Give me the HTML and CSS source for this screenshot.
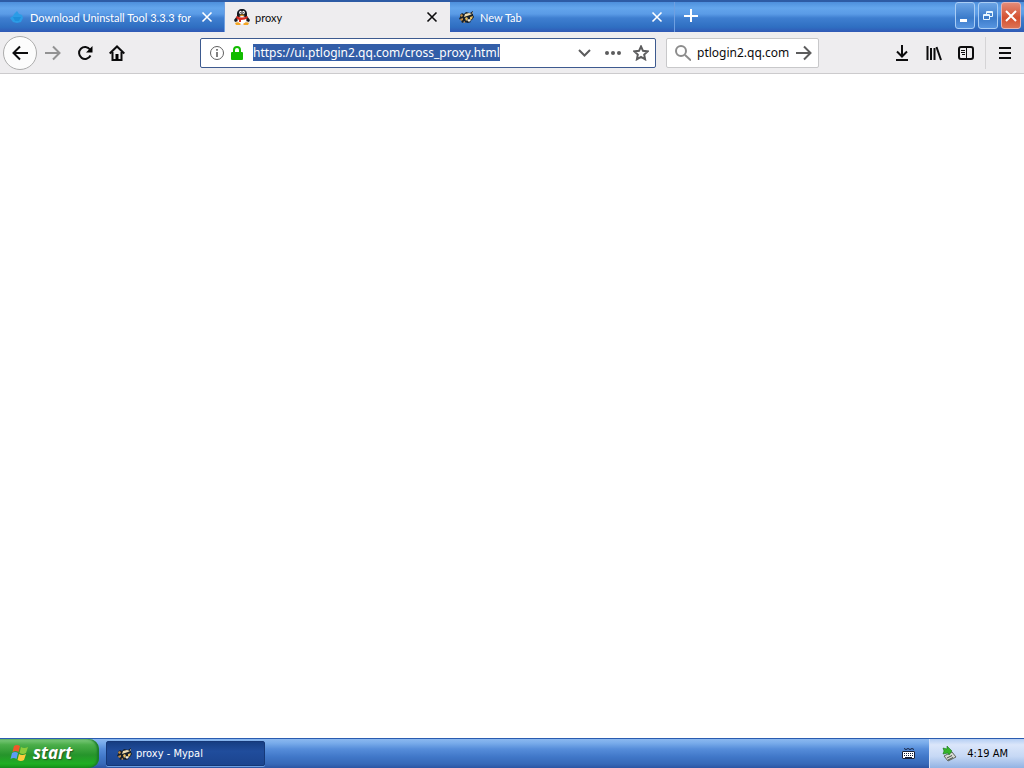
FILE: index.html
```html
<!DOCTYPE html>
<html lang="en">
<head>
    <meta charset="UTF-8">
    <meta name="viewport" content="width=device-width, initial-scale=1.0">
    <title>proxy</title>
    <link rel="stylesheet" href="styles.css">
</head>
<body>
<svg class="symbols" aria-hidden="true">
    <symbol id="raccoon" viewBox="0 0 16 16">
        <path fill="#17202a" d="M1 6l2-2 2 1 2-2 4 1 3-2v4l1 2-2 3-2 1 1 1-3 1-4-1-2 1-1-3-2-1 1-2z"/>
        <path fill="#c08c4a" d="M1 6l2-1 1 2-2 1zM1 10l3-1v2l-2 1zM4 13l2-1v2z"/>
        <path fill="#f0ddb0" d="M6 5l4-1 3 1-2 1-3 1-3 1z"/>
        <path fill="#e9bf62" d="M6 9l2-1 1 2-2 2zM11 8l3-1-1 3-2 1z"/>
        <path fill="#f5eedc" d="M8 11l2-1 2 1-2 2zM13 4l1-1v2z"/>
    </symbol>
    <symbol id="close" viewBox="0 0 12 12">
        <path fill="none" stroke="currentColor" stroke-width="1.6" d="M1.5 1.5l9 9M10.500 1.500l-9 9"/>
    </symbol>
</svg>

<header class="tab-bar">
    <div class="tab">
        <svg class="favicon" viewBox="0 0 16 16">
            <path fill="#2b9ce6" d="M5 5l3-3 2 3 3 1 1 3-2 4-4 1-4-1-3-4 3-2z"/>
            <path fill="#1e8eda" d="M4 8h8l-2 4H6z"/>
        </svg>
        <span class="tab-title">Download Uninstall Tool 3.3.3 for</span>
        <button class="tab-close" aria-label="Close tab"><svg><use href="#close"/></svg></button>
    </div>
    <div class="tab active">
        <svg class="favicon" viewBox="0 0 16 16">
            <path fill="#151820" d="M8 0c3 0 5 2 5 5v2l3 4-1 2-3-1-1 2H5l-1-2-3 1-1-2 3-4V5c0-3 2-5 5-5z"/>
            <ellipse cx="8" cy="11" rx="4.500" ry="4" fill="#fff"/>
            <ellipse cx="6.500" cy="3.500" rx="1.300" ry="1.800" fill="#fff"/>
            <ellipse cx="9.500" cy="3.500" rx="1.300" ry="1.800" fill="#fff"/>
            <circle cx="6.900" cy="3.700" r=".6"/>
            <circle cx="9.100" cy="3.700" r=".6"/>
            <path fill="#f5a623" d="M5 6q3-1 6 0-3 2-6 0zM1 14q3-2 6 1l-1 1H2zM15 14q-3-2-6 1l1 1h4z"/>
            <path fill="#dc2c20" d="M3 7q5 3 10 0l1 2q-3 2-7 2v2H5v-2L2 9z"/>
        </svg>
        <span class="tab-title">proxy</span>
        <button class="tab-close" aria-label="Close tab"><svg><use href="#close"/></svg></button>
    </div>
    <div class="tab">
        <svg class="favicon"><use href="#raccoon"/></svg>
        <span class="tab-title">New Tab</span>
        <button class="tab-close" aria-label="Close tab"><svg><use href="#close"/></svg></button>
    </div>
    <button class="new-tab" aria-label="New tab">
        <svg viewBox="0 0 16 16"><path fill="none" stroke="currentColor" stroke-width="2" d="M8 1v13M1 8h14"/></svg>
    </button>
    <div class="window-buttons">
        <button class="window-button" aria-label="Minimize">
            <svg viewBox="0 0 18 24"><path fill="#fff" d="M4 15h7v3H4z"/></svg>
        </button>
        <button class="window-button" aria-label="Restore">
            <svg viewBox="0 0 18 24"><path fill="none" stroke="#e8f7ff" d="M4.500 10.500h6v5h-6zM4 11.500h7M7.500 10V7.500h6v5H11M7 8.500h7"/></svg>
        </button>
        <button class="window-button close" aria-label="Close">
            <svg viewBox="0 0 18 24"><path fill="none" stroke="#fff" stroke-width="2" d="M4 7l10 10M14 7L4 17"/></svg>
        </button>
    </div>
</header>

<nav class="toolbar">
    <button class="back" aria-label="Back">
        <svg viewBox="0 0 16 16"><path class="line" d="M16 8H1.500M8 1.500L1.500 8 8 14.500"/></svg>
    </button>
    <button class="tool forward" aria-label="Forward">
        <svg viewBox="0 0 16 16"><path class="line" d="M0 8h14.500M8 1.500L14.500 8 8 14.500"/></svg>
    </button>
    <button class="tool" aria-label="Reload">
        <svg viewBox="0 0 16 16"><path class="line" d="M13.500 10.500A6 6 0 1 1 13 4.500"/><path d="M15.500 1v6.500H9z"/></svg>
    </button>
    <button class="tool" aria-label="Home">
        <svg viewBox="0 0 16 16"><path class="line" d="M.7 8.500L8 1.500l7.300 7M3.500 7v8h9V7"/><path d="M6.500 9h3v6h-3z"/></svg>
    </button>

    <div class="url-bar">
        <svg class="info" viewBox="0 0 16 16"><circle cx="8" cy="8" r="6.500" fill="none" stroke="#606060"/><path fill="#606060" d="M7.200 7h1.600v5H7.200zM7.200 4h1.600v1.700H7.200z"/></svg>
        <svg class="lock" viewBox="0 0 16 16"><path fill="none" stroke="#12bc00" stroke-width="2" d="M5 8V5a3 3 0 0 1 6 0v3"/><rect x="2" y="7" width="12" height="8" rx="1" fill="#12bc00"/></svg>
        <input class="url" id="url" type="text" aria-label="Address" value="https://ui.ptlogin2.qq.com/cross_proxy.html" spellcheck="false">
        <button class="field-button" aria-label="Show history">
            <svg viewBox="0 0 16 16"><path class="line" d="M2 5l5.500 5.500L13 5"/></svg>
        </button>
        <button class="field-button" aria-label="Page actions">
            <svg viewBox="0 0 16 16" fill="currentColor"><circle cx="2" cy="8" r="2"/><circle cx="8" cy="8" r="2"/><circle cx="14" cy="8" r="2"/></svg>
        </button>
        <button class="field-button" aria-label="Bookmark">
            <svg viewBox="0 0 16 16"><path class="line" d="M8 1.500l2 4.300 4.700.6-3.500 3.200.9 4.700L8 12l-4.100 2.300.9-4.700-3.500-3.200 4.700-.6z"/></svg>
        </button>
    </div>

    <div class="search-bar">
        <svg class="glass" viewBox="0 0 16 16"><circle cx="6" cy="6" r="5" fill="none" stroke="#8c8c8c" stroke-width="2"/><path stroke="#8c8c8c" stroke-width="2" d="M10 10l6 5.500"/></svg>
        <input class="search" type="text" aria-label="Search" value="ptlogin2.qq.com" spellcheck="false">
        <button class="field-button go" aria-label="Go">
            <svg viewBox="0 0 16 16"><path class="line" d="M0 8h14.500M8 1.500L14.500 8 8 14.500"/></svg>
        </button>
    </div>

    <div class="tools-right">
        <button class="tool" aria-label="Downloads">
            <svg viewBox="0 0 16 16"><path class="line" d="M8 0v11M3 6.500L8 11.500l5-5M2 15h12"/></svg>
        </button>
        <button class="tool" aria-label="Library">
            <svg viewBox="0 0 16 16"><path class="line" d="M1.500 1v14M5 3v12M8.500 3v12M10.500 2l4.500 13"/></svg>
        </button>
        <button class="tool" aria-label="Sidebars">
            <svg viewBox="0 0 16 16"><rect class="line" x="1" y="2" width="14" height="12" rx="2"/><path stroke="#0c0c0d" d="M8.500 2v12M3 5.500h4M3 7.500h4M4 9.500h3"/></svg>
        </button>
    </div>
    <button class="menu" aria-label="Menu">
        <svg viewBox="0 0 16 16"><path class="line" d="M2 3h12M2 8h12M2 13h12"/></svg>
    </button>
</nav>

<main class="page"></main>

<footer class="taskbar">
    <button class="start">
        <svg class="flag" viewBox="0 0 20 20">
            <path fill="#f0582a" d="M4 3q3-2 6 0L8.500 9q-3-2-6 0z"/>
            <path fill="#8ccc3c" d="M11 4q3 2 7 0l-2 6q-3 2-6.500 0z"/>
            <path fill="#5b9cf5" d="M2 10q3-2 6 0l-1.500 6q-3-2-6 0z"/>
            <path fill="#fccb3c" d="M9 11q3 2 7 0l-2 6q-3 2-6.500 0z"/>
        </svg>
        start
    </button>
    <button class="task">
        <svg class="favicon"><use href="#raccoon"/></svg>
        proxy - Mypal
    </button>
    <svg class="keyboard" viewBox="0 0 16 16">
        <path fill="#fff" d="M1 5h13v8H1z"/>
        <path fill="none" stroke="#15203a" d="M1.500 5.500h12v7h-12zM4 11.500h7M3 2.500l2 1 2-1 2 1 2-1 2 1"/>
        <path fill="none" stroke="#15203a" stroke-dasharray="1 1" d="M3 7.500h10M3 9.500h10"/>
    </svg>
    <div class="tray">
        <svg class="device" viewBox="0 0 16 16">
            <path fill="#d7d9d2" stroke="#5d655e" d="M3 10l8-4 4 5-8 4z"/>
            <path stroke="#48504a" d="M6 12l5-2.500M7 14l5-2.500"/>
            <path fill="#35b52a" stroke="#187518" stroke-width=".6" d="M2 2l4 1V0l5 5-3 4-1-2-5 1 1-3z"/>
        </svg>
        <time>4:19 AM</time>
    </div>
</footer>

<script>
    const urlInput = document.getElementById('url');
    urlInput.focus();
    urlInput.select();
</script>
</body>
</html>
```
FILE: styles.css
```css
* {
    box-sizing: border-box;
    margin: 0;
    padding: 0;
}

body {
    display: flex;
    flex-direction: column;
    min-height: 100vh;
    background-color: #fff;
    color: #0c0c0d;
    font-family: "Noto Sans", "Open Sans", sans-serif;
    font-size: 12px;
}

button {
    border: none;
    background: none;
    color: inherit;
    font: inherit;
}

input {
    border: none;
    outline: none;
    min-width: 0;
    background: transparent;
    color: #0c0c0d;
    font: inherit;
}

svg {
    display: block;
    width: 16px;
    height: 16px;
    flex: none;
}

.symbols {
    display: none;
}

.line {
    fill: none;
    stroke: currentColor;
    stroke-width: 2;
}

/* tabs */
.tab-bar {
    display: flex;
    height: 32px;
    border-top: 2px solid #2d5ba5;
    background: linear-gradient(#4d8fdc 0, #63a5ec 6px, #5a9be6 12px, #3f7fd0 16px, #2f6fc2 25px, #3059b5 30px);
    color: #fff;
}

.tab {
    display: flex;
    align-items: center;
    flex: 0 1 225px;
    min-width: 0;
    padding: 0 9px;
    border-right: 1px solid #6f9fe0;
    font-family: Lato, "Noto Sans", sans-serif;
    font-size: 11px;
}

.tab.active {
    background-color: #eeedef;
    border-right-color: #eeedef;
    color: #0c0c0d;
}

.favicon {
    margin-right: 5px;
}

.tab-title {
    flex: 1;
    min-width: 0;
    overflow: hidden;
    white-space: nowrap;
}

.tab-close {
    padding: 2px;
    margin-left: 8px;
}

.tab-close svg {
    width: 12px;
    height: 12px;
}

.new-tab {
    display: flex;
    align-items: center;
    padding: 0 8px 2px;
}

.window-buttons {
    display: flex;
    gap: 3px;
    margin-left: auto;
    padding: 0 3px 3px 0;
}

.window-button {
    width: 20px;
    border: 1px solid #a9cdf5;
    border-radius: 3px;
    background: linear-gradient(#6ba4e6, #3b7bca 60%, #5795e0);
}

.window-button svg {
    width: 18px;
    height: 24px;
}

.window-button.close {
    border-color: #e6b4b4;
    background: linear-gradient(#e48b78, #d4502f 60%, #dc7355);
}

/* navigation */
.toolbar {
    display: flex;
    align-items: center;
    height: 42px;
    padding: 0 11px 0 3px;
    border-bottom: 1px solid #cccbcd;
    background-color: #eeedef;
}

.back {
    display: flex;
    align-items: center;
    justify-content: center;
    width: 34px;
    height: 34px;
    border: 1px solid #acacac;
    border-radius: 50%;
    background-color: #fcfcfc;
}

.tool {
    padding: 8px;
}

.forward {
    color: #929293;
}

.url-bar,
.search-bar {
    display: flex;
    align-items: center;
    height: 30px;
    border: 1px solid #3d5a8f;
    border-radius: 2px;
    background-color: #fff;
}

.url-bar {
    flex: 1 1 456px;
    margin-left: 67px;
    padding: 0 6px 0 8px;
    gap: 4px;
}

.url {
    flex: 1;
    margin-left: 4px;
}

.url::selection {
    background-color: #335ea8;
    color: #fff;
}

.field-button {
    margin-left: 8px;
    color: #5c5c5d;
}

.search-bar {
    flex: 0 1 153px;
    min-width: 0;
    margin-left: 10px;
    padding: 0 6px 0 8px;
    border-color: #c8c8ca;
}

.search {
    flex: 1;
    margin-left: 6px;
}

.go {
    margin-left: 6px;
}

.tools-right {
    display: flex;
    margin-left: 67px;
    padding-right: 3px;
}

.menu {
    padding: 8px 0 8px 11px;
    border-left: 1px solid #d5d4d6;
}

.page {
    flex: 1;
}

/* taskbar */
.taskbar {
    display: flex;
    align-items: center;
    height: 30px;
    border-top: 1px solid #2a5cb0;
    background: linear-gradient(#8bb8ef 0, #79aceb 4px, #568dda 10px, #4077c8 18px, #3769b8 25px, #2c55a3);
    color: #fff;
    font-family: "DejaVu Sans Condensed", "DejaVu Sans", sans-serif;
    font-size: 11px;
}

.start {
    display: flex;
    align-items: center;
    gap: 3px;
    width: 99px;
    height: 29px;
    padding: 0 10px 2px;
    border-radius: 0 10px 10px 0;
    background: linear-gradient(#7fcb7f, #4bae4a 20%, #26942b 55%, #1fae23 85%, #159318);
    box-shadow: inset -2px 0 2px #1b7b2a;
    font-family: "Open Sans", "Noto Sans", sans-serif;
    font-size: 17px;
    font-weight: bold;
    font-style: italic;
    text-shadow: 1px 1px 1px #255c22;
}

.flag {
    width: 20px;
    height: 20px;
}

.task {
    display: flex;
    align-items: center;
    flex: 0 1 159px;
    height: 25px;
    margin-left: 7px;
    padding: 0 10px;
    border: 1px solid #153878;
    border-radius: 2px;
    background: linear-gradient(#163e83, #204d9c 40%, #1b448f);
    box-shadow: 0 1px 0 #6e9fe2;
    text-align: left;
}

.task .favicon {
    margin-right: 3px;
}

.keyboard {
    margin-left: auto;
    margin-right: 12px;
}

.tray {
    display: flex;
    align-items: center;
    gap: 10px;
    height: 29px;
    padding: 0 16px 0 11px;
    border-left: 1px solid #d4e2fa;
    background: linear-gradient(#b5cef3, #dbe6fa 20%, #c6d8f5 60%, #93b3e3);
    color: #000;
}
```
